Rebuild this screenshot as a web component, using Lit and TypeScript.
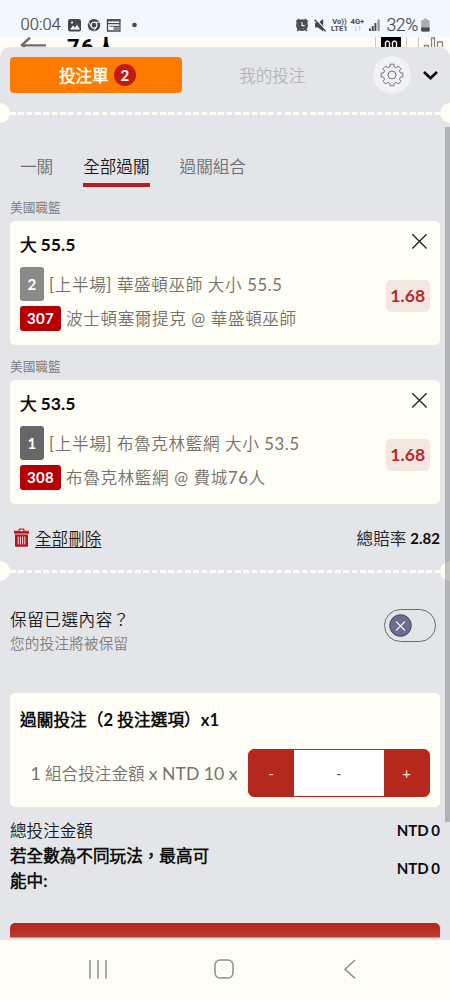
import { LitElement, html, css } from "lit";
import { customElement, property } from "lit/decorators.js";

const shared = css`
  * { box-sizing: border-box; }
  svg { display: block; flex: none; }
`;

@customElement("status-bar")
class StatusBar extends LitElement {
  static styles = [shared, css`
    :host {
      display: flex; height: 37px; padding: 13px 19px 0 20.5px; background: #f3f7fe;
      color: #47484c; font-family: Roboto, sans-serif; justify-content: space-between;
    }
    .side { display: flex; align-items: center; height: 24px; }
    .time { font-size: 16.6px; line-height: 24px; width: 46.5px; font-weight: 300; -webkit-text-stroke: 0.2px #47484c; white-space: nowrap; }
    .lte { display: flex; flex-direction: column; font-weight: 700; font-size: 7.6px; line-height: 7.4px; align-items: center; white-space: nowrap; }
    .lte .low { font-size: 8px; color: #a2a5aa; }
    .volte { width: 16px; margin-right: 3px; }
    .net { width: 14px; margin-right: 4px; }
    .pct { font-size: 17.6px; font-weight: 300; -webkit-text-stroke: 0.2px #47484c; white-space: nowrap; margin-left: 5px; margin-right: 2px; letter-spacing: -0.3px; }
  `];
  render() {
    return html`
      <div class="side">
        <span class="time">00:04</span>
        <svg width="74" height="16" viewBox="0 0 74 16">
          <rect x="1" y="2" width="13" height="12.5" rx="2" fill="#47484c" />
          <path d="M3 12.5l3-4 2 2.2 2-3.2 3 5z" fill="#f3f7fe" /><circle cx="5" cy="5.6" r="1.1" fill="#f3f7fe" />
          <circle cx="27" cy="8.2" r="6.2" fill="#47484c" />
          <circle cx="27" cy="8.2" r="2.9" fill="none" stroke="#f3f7fe" stroke-width="1.1" />
          <path d="M27 5.3h5.6M24.4 9.6l-3-4.6M29.5 9.8l-3 4.6" stroke="#f3f7fe" stroke-width="1" />
          <path d="M40.5 3h12.4v11h-12.4z" fill="none" stroke="#47484c" stroke-width="1.3" />
          <path d="M39.9 3.3h13.6" stroke="#47484c" stroke-width="2.6" stroke-dasharray="2.2 .65" />
          <path d="M40.5 6.6h12.4" stroke="#47484c" stroke-width="1.2" />
          <path d="M46.5 9h6v4.2h-6z" fill="#8c8d90" /><path d="M42.5 9.3h10" stroke="#47484c" stroke-width=".8" />
          <circle cx="67.5" cy="8" r="2.3" fill="#47484c" />
        </svg>
      </div>
      <div class="side">
        <svg width="36" height="16" viewBox="0 0 36 16">
          <path d="M4.2 2.2L1.2 4.8M9.8 2.2l3 2.6M3.6 12.4l-1.4 1.6M10.4 12.4l1.4 1.6" stroke="#47484c" stroke-width="1.7" />
          <circle cx="7" cy="8.2" r="4.7" fill="none" stroke="#47484c" stroke-width="2.4" />
          <circle cx="7" cy="8.2" r="3.6" fill="#47484c" />
          <path d="M7 5.2v3.4h2.6" fill="none" stroke="#f3f7fe" stroke-width="1.2" />
          <path d="M20 6h3l5.2-4v12.4l-5.2-4h-3z" fill="#47484c" />
          <path d="M20.6 2l11 11.5" stroke="#f3f7fe" stroke-width="1.2" /><path d="M19.6 2.8l11 11.4" stroke="#47484c" stroke-width="1.5" />
        </svg>
        <span class="lte volte"><span>Vo))</span><span>LTE1</span></span>
        <span class="lte net"><span>4G+</span><span class="low">↓↑</span></span>
        <svg width="13" height="16" viewBox="0 0 13 16">
          <path d="M2 11.5v2.5M4.7 9v5M7.4 6v8" stroke="#47484c" stroke-width="1.9" />
          <path d="M10.6 2.5V14" stroke="#8f9296" stroke-width="2.2" />
        </svg>
        <span class="pct">32%</span>
        <svg width="11" height="16" viewBox="0 0 11 16">
          <path d="M3.6 1.5h3.6v1.5h1.4a1 1 0 0 1 1 1v9.5a1 1 0 0 1-1 1H2.2a1 1 0 0 1-1-1V4a1 1 0 0 1 1-1h1.4z" fill="#abadb0" />
          <path d="M1.2 10.5h8.4v3a1 1 0 0 1-1 1H2.2a1 1 0 0 1-1-1z" fill="#47484c" />
        </svg>
      </div>`;
  }
}

@customElement("ticket-divider")
class TicketDivider extends LitElement {
  static styles = [shared, css`
    :host { display: flex; height: 20px; align-items: center; justify-content: space-between; overflow: hidden; }
    .notch { flex: none; width: 20px; height: 20px; border-radius: 50%; background: #fffef6; }
    .left { margin-left: -10px; }
    .right { margin-right: -10px; }
    .line { flex: 1; height: 3px; margin-top: 1px; background: repeating-linear-gradient(90deg, #fffef8 0 5.8px, transparent 5.8px 8.33px); }
  `];
  render() {
    return html`<div class="notch left"></div><div class="line"></div><div class="notch right"></div>`;
  }
}

@customElement("bet-card")
class BetCard extends LitElement {
  @property() line = "";
  @property() badge = "";
  @property() tone = "";
  @property() market = "";
  @property() code = "";
  @property() match = "";
  @property() odds = "";
  static styles = [shared, css`
    :host { display: block; }
    .card { height: 124px; border-radius: 5px; background: #fffef6; padding: 11px 10px 0; }
    .head { display: flex; justify-content: space-between; height: 34.5px; }
    .pick { font-size: 16.6px; line-height: 26px; font-weight: 700; color: #0b0b0b; display: flex; gap: 4px; }
    .pick .num { font-size: 17.6px; }
    .body { display: flex; justify-content: space-between; }
    .row { display: flex; align-items: center; height: 34.4px; font-size: 16.6px; letter-spacing: 0.62px; color: #74726d; gap: 5px; white-space: nowrap; }
    .tag { border-radius: 3px; color: #fff; font-weight: 700; font-size: 15px; letter-spacing: 0.3px; display: flex; align-items: center; justify-content: center; }
    .seed { width: 24px; height: 34.4px; background: #8a8a8a; }
    .seed.dark { background: #676767; }
    .code { width: 41px; height: 25px; background: #b60003; }
    .odds { width: 44.5px; height: 32px; margin-top: 13.5px; border-radius: 5px; background: #f6e6e0; color: #b6282b; font-weight: 700; font-size: 17.6px; line-height: 32px; text-align: center; }
    .close { margin: 1px 2px 0 0; }
  `];
  render() {
    return html`<div class="card">
      <div class="head">
        <div class="pick"><span>大</span><span class="num">${this.line}</span></div>
        <svg class="close" width="17" height="17" viewBox="0 0 17 17"><path d="M1.3 1.3l14.3 14.2M15.6 1.3L1.3 15.5" stroke="#222" stroke-width="1.3" fill="none" /></svg>
      </div>
      <div class="body">
        <div>
          <div class="row"><span class="tag seed ${this.tone}">${this.badge}</span><span>${this.market}</span></div>
          <div class="row"><span class="tag code">${this.code}</span><span>${this.match}</span></div>
        </div>
        <div class="odds">${this.odds}</div>
      </div>
    </div>`;
  }
}

const gearPath = (() => {
  const pts: string[] = [];
  for (let i = 0; i < 8; i++) {
    const a = (i * Math.PI) / 4 - Math.PI / 2;
    for (const [d, r] of [[-0.27, 8.6], [-0.17, 11], [0.17, 11], [0.27, 8.6]]) {
      pts.push(`${(12 + r * Math.cos(a + d)).toFixed(2)} ${(12 + r * Math.sin(a + d)).toFixed(2)}`);
    }
  }
  return "M" + pts.join("L") + "Z";
})();

@customElement("app-root")
class AppRoot extends LitElement {
  static styles = [shared, css`
    :host {
      display: flex; flex-direction: column; width: 450px; height: 1000px; overflow: hidden; background: #fffef6;
      font-family: Lato, "Noto Sans CJK TC DemiLight", "Noto Sans CJK TC", sans-serif; color: #1a1a1c; font-size: 16.6px;
    }
    .peek { height: 10px; flex: none; display: flex; overflow: hidden; padding: 0 0 0 20px; }
    .peek-title { font: 700 22px/30px Roboto, "Noto Sans CJK TC", sans-serif; color: #000; margin: -4px 0 0 20px; width: 303px; height: 30px; flex: none; white-space: nowrap; letter-spacing: 1.5px; }
    .sheet { height: 893px; flex: none; background: #e4e5e8; border-radius: 10px 10px 0 0; overflow: hidden; display: flex; flex-direction: column; }
    .top { display: flex; align-items: center; height: 56px; flex: none; padding: 0 11px 0 10px; }
    .tab-main { width: 172px; height: 35.5px; border-radius: 4px; background: #ff7a00; color: #fffdf0; font-weight: 700; display: flex; justify-content: center; align-items: center; gap: 5px; padding-left: 3px; }
    .count { width: 22.4px; height: 22.4px; border-radius: 50%; background: #c21a12; font-size: 15px; line-height: 22px; text-align: center; }
    .tab-other { flex: 1; text-align: center; color: #b4b5b8; padding-right: 10.5px; }
    .gear { width: 38px; height: 38px; border-radius: 50%; background: #f1f2f5; display: flex; align-items: center; justify-content: center; margin-right: 11px; }
    ticket-divider { flex: none; }
    .main { position: relative; flex: 1; min-height: 0; }
    .col { padding: 33px 10px 0; }
    .thumb { position: absolute; top: 4px; right: 0; width: 5px; height: 695px; background: rgba(95, 96, 98, 0.38); }
    .tabs { display: flex; gap: 30px; padding-left: 10px; height: 43px; color: #6e6f73; }
    .tabs span { line-height: 22px; height: 30.5px; }
    .tabs .on { color: #18181a; border-bottom: 4px solid #b81c22; }
    .league { font-size: 12.7px; line-height: 16px; height: 22px; color: #77787b; }
    .gap { height: 13px; }
    .summary { display: flex; align-items: center; justify-content: space-between; height: 57px; padding-top: 11px; }
    .del { display: flex; align-items: center; gap: 6px; padding-left: 4px; }
    .del span { text-decoration: underline; text-underline-offset: 2px; text-decoration-thickness: 1.3px; }
    .total { display: flex; gap: 4px; align-items: center; color: #222; }
    .total b { font-size: 15px; color: #0c0c0c; }
    .full { margin: 0 -10px; }
    .keep { display: flex; justify-content: space-between; height: 112px; padding: 27px 4px 0 0; }
    .keep-t { line-height: 24px; letter-spacing: 0.55px; }
    .keep-s { font-size: 14.6px; line-height: 24px; color: #7d7e81; letter-spacing: 0.2px; }
    .switch { width: 52px; height: 32.5px; border: 1.4px solid #66687f; border-radius: 17px; padding: 4px 4px 4px 3.5px; margin-top: 1px; }
    .combo { height: 114px; border-radius: 5px; background: #fffef6; padding: 14px 10px 0; }
    .combo-t { font-weight: 700; color: #0c0c0c; line-height: 26px; height: 42px; white-space: nowrap; letter-spacing: 0.1px; }
    .combo-r { display: flex; align-items: center; justify-content: flex-end; gap: 10px; color: #75736f; white-space: nowrap; }
    .lat { font-size: 17.6px; }
    .stepper { display: grid; grid-template-columns: 45px 1fr 45px; width: 182.5px; height: 48px; border: 1px solid #b5281d; border-radius: 6px; overflow: hidden; background: #b5281d; text-align: center; line-height: 46px; color: #f7ded6; font-size: 15px; }
    .stepper .val { background: #fff; color: #555; }
    .sum { display: flex; align-items: center; justify-content: space-between; }
    .first { margin-top: 12px; }
    .sum b { font-size: 15px; color: #0c0c0c; word-spacing: -1px; padding-bottom: 3px; }
    .sum .lbl { width: 202px; line-height: 25px; }
    .sum .strong { font-weight: 700; color: #0c0c0c; }
    .submit { margin-top: 29px; height: 14.5px; border-radius: 5px 5px 0 0; background: linear-gradient(#b5241b, #bd3a30); border-bottom: 1px solid #d98c86; }
    .nav { display: flex; flex: 1; align-items: center; justify-content: center; padding: 0 2px 2px 0; }
  `];
  render() {
    return html`
      <status-bar></status-bar>
      <div class="peek">
        <svg width="27" height="24" viewBox="0 0 27 24"><path d="M10 0.5L2 8l8 7.5M2 8.4h24" fill="none" stroke="#6f6d68" stroke-width="2.4" /></svg>
        <div class="peek-title">76人</div>
        <svg width="75" height="10" viewBox="0 0 75 10">
          <path d="M5.5 0v10M36.5 0v10M48.5 0v10" stroke="#cfc9bd" />
          <rect x="11" y="0" width="20" height="10" fill="#000" />
          <path d="M15.5 10V5.5q2-3 4 0V10M22.5 10V5.5q2-3 4 0V10" fill="none" stroke="#fff" stroke-width="1.4" />
          <path d="M54.5 10V8.5h4V10M61.5 10V1h3v9M67.5 10V5h5v5" fill="none" stroke="#8b867e" stroke-width="1.3" />
        </svg>
      </div>
      <div class="sheet">
        <div class="top">
          <div class="tab-main"><span>投注單</span><span class="count">2</span></div>
          <div class="tab-other">我的投注</div>
          <div class="gear"><svg width="24" height="24" viewBox="0 0 24 24"><path d=${gearPath} fill="none" stroke="#707175" stroke-width="1" stroke-linejoin="round" /><circle cx="12" cy="12" r="4" fill="none" stroke="#707175" /></svg></div>
          <svg width="17" height="12" viewBox="0 0 17 12"><path d="M2 3l6.5 6.3L15 3" fill="none" stroke="#080808" stroke-width="2.6" /></svg>
        </div>
        <ticket-divider></ticket-divider>
        <div class="main">
          <div class="col">
            <div class="tabs"><span>一關</span><span class="on">全部過關</span><span>過關組合</span></div>
            <div class="league">美國職籃</div>
            <bet-card line="55.5" badge="2" market="[上半場] 華盛頓巫師 大小 55.5" code="307" match="波士頓塞爾提克 @ 華盛頓巫師" odds="1.68"></bet-card>
            <div class="gap"></div>
            <div class="league">美國職籃</div>
            <bet-card line="53.5" badge="1" tone="dark" market="[上半場] 布魯克林籃網 大小 53.5" code="308" match="布魯克林籃網 @ 費城76人" odds="1.68"></bet-card>
            <div class="summary">
              <div class="del">
                <svg width="15" height="20" viewBox="0 0 15 20"><path d="M0 3.2h15v2H0zM5 3.2V1h5v2.2" fill="#b91218" stroke="#b91218" stroke-width=".8" /><rect x="5.6" y="1.7" width="3.8" height="1.5" fill="#e4e5e8" /><path d="M1 6.5h13v11.3a1 1 0 0 1-1 1H2a1 1 0 0 1-1-1z" fill="#b91218" /><path d="M4.2 8.5v8M6.4 8.5v8M8.6 8.5v8M10.8 8.5v8" stroke="#eee0e1" stroke-width="1" /></svg>
                <span>全部刪除</span>
              </div>
              <div class="total">總賠率 <b>2.82</b></div>
            </div>
            <ticket-divider class="full"></ticket-divider>
            <div class="keep">
              <div><div class="keep-t">保留已選內容？</div><div class="keep-s">您的投注將被保留</div></div>
              <div class="switch"><svg width="23" height="23" viewBox="0 0 23 23"><circle cx="11.5" cy="11.5" r="10.8" fill="#6c6d8f" stroke="#40425f" stroke-width="1" /><path d="M7 7.5l9 9M16 7.5l-9 9" stroke="#f0f0f5" stroke-width="1.2" /></svg></div>
            </div>
            <div class="combo">
              <div class="combo-t">過關投注（2 投注選項）x1</div>
              <div class="combo-r"><span><span class="lat">1</span> 組合投注金額 <span class="lat">x NTD 10 x</span></span>
                <div class="stepper"><span>-</span><span class="val">-</span><span>+</span></div></div>
            </div>
            <div class="sum first"><span class="lbl">總投注金額</span><b>NTD 0</b></div>
            <div class="sum"><span class="lbl strong">若全數為不同玩法，最高可能中:</span><b>NTD 0</b></div>
            <div class="submit"></div>
          </div>
          <div class="thumb"></div>
        </div>
      </div>
      <div class="nav">
        <svg width="270" height="24" viewBox="0 0 270 24" fill="none" stroke="#8f8e89" stroke-width="1.5">
          <path d="M1 3v18.5M9 3v18.5M17 3v18.5" /><rect x="126" y="3" width="18" height="18" rx="5" /><path d="M266 3l-10 9.2 10 9.2" />
        </svg>
      </div>`;
  }
}
